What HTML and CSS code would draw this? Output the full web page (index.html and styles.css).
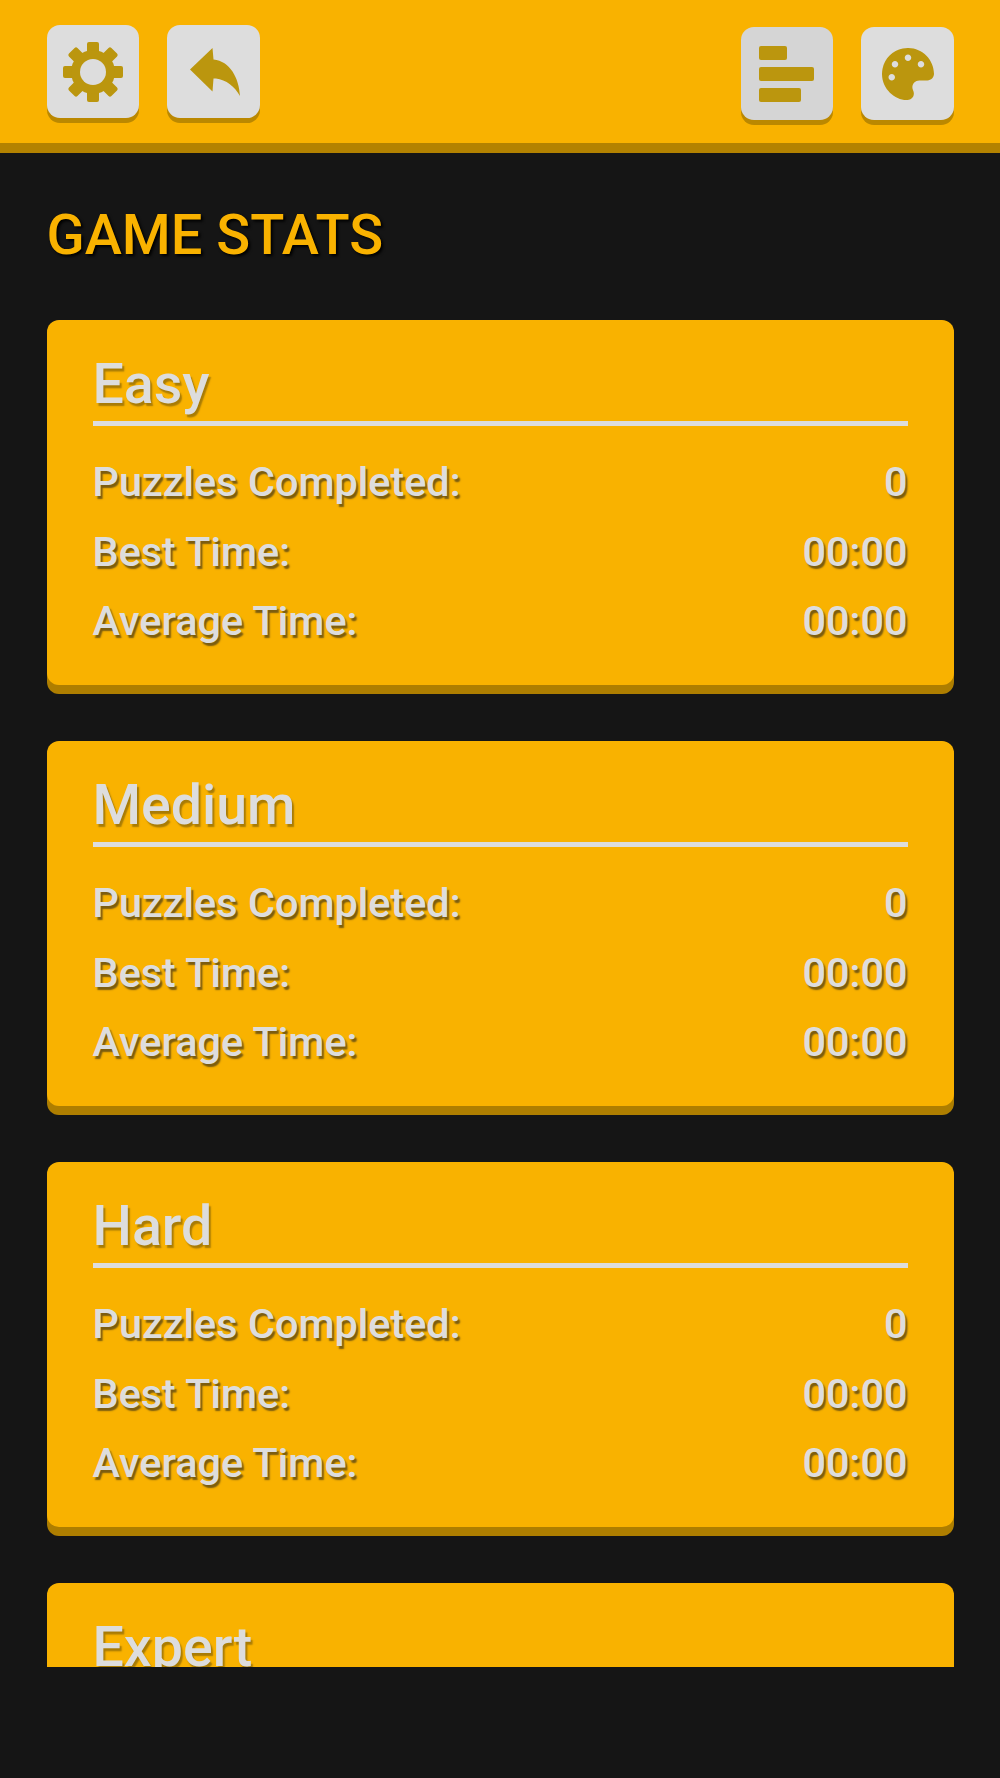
FILE: index.html
```html
<!DOCTYPE html>
<html lang="en">
<head>
<meta charset="utf-8">
<title>Game Stats</title>
<link rel="stylesheet" href="styles.css">
</head>
<body>
<header class="topbar">
  <div class="btn-group btn-group-left">
    <button class="icon-btn" aria-label="Settings">
      <svg class="icon" viewBox="0 0 60 60">
        <g class="icon-fill">
          <rect x="24" y="0" width="12" height="60" rx="2"/>
          <rect x="24" y="0" width="12" height="60" rx="2" transform="rotate(45 30 30)"/>
          <rect x="24" y="0" width="12" height="60" rx="2" transform="rotate(90 30 30)"/>
          <rect x="24" y="0" width="12" height="60" rx="2" transform="rotate(135 30 30)"/>
          <circle cx="30" cy="30" r="22"/>
        </g>
        <circle class="icon-hole" cx="30" cy="30" r="13"/>
      </svg>
    </button>
    <button class="icon-btn" aria-label="Back">
      <svg class="icon" viewBox="0 0 60 60">
        <path class="icon-fill" d="M29.500 6 L30.500 17.500 C47 19 56 36 57 54 C52 45 43 37.500 33 36.500 L30.500 36.500 L29.500 49.500 L7 27.500 Z"/>
      </svg>
    </button>
  </div>
  <div class="btn-group btn-group-right">
    <button class="icon-btn icon-btn-active" aria-label="Stats">
      <span class="bars">
        <span class="bar bar-short"></span>
        <span class="bar bar-long"></span>
        <span class="bar bar-mid"></span>
      </span>
    </button>
    <button class="icon-btn" aria-label="Theme">
      <svg class="icon icon-palette" viewBox="0 0 512 512">
        <path class="icon-fill" d="M204.3 5C104.9 24.400 24.800 104.300 5.200 203.400c-37 187 131.700 326.400 258.800 306.700 41.200-6.400 61.400-54.600 42.500-91.700-23.100-45.400 9.900-98.400 60.900-98.400h79.700c35.800 0 64.800-29.600 64.900-65.300C511.500 97.100 368.100-26.900 204.300 5zM96 320c-17.700 0-32-14.300-32-32s14.300-32 32-32 32 14.300 32 32-14.300 32-32 32zm32-128c-17.700 0-32-14.300-32-32s14.300-32 32-32 32 14.300 32 32-14.300 32-32 32zm128-64c-17.700 0-32-14.300-32-32s14.300-32 32-32 32 14.300 32 32-14.300 32-32 32zm128 64c-17.700 0-32-14.300-32-32s14.300-32 32-32 32 14.300 32 32-14.300 32-32 32z"/>
      </svg>
    </button>
  </div>
</header>
<main class="content">
  <h1 class="page-title">GAME STATS</h1>
  <div class="card-list">
    <section class="card">
      <h2 class="card-title">Easy</h2>
      <div class="row"><span>Puzzles Completed:</span><span>0</span></div>
      <div class="row"><span>Best Time:</span><span>00:00</span></div>
      <div class="row"><span>Average Time:</span><span>00:00</span></div>
    </section>
    <section class="card">
      <h2 class="card-title">Medium</h2>
      <div class="row"><span>Puzzles Completed:</span><span>0</span></div>
      <div class="row"><span>Best Time:</span><span>00:00</span></div>
      <div class="row"><span>Average Time:</span><span>00:00</span></div>
    </section>
    <section class="card">
      <h2 class="card-title">Hard</h2>
      <div class="row"><span>Puzzles Completed:</span><span>0</span></div>
      <div class="row"><span>Best Time:</span><span>00:00</span></div>
      <div class="row"><span>Average Time:</span><span>00:00</span></div>
    </section>
    <section class="card">
      <h2 class="card-title">Expert</h2>
      <div class="row"><span>Puzzles Completed:</span><span>0</span></div>
      <div class="row"><span>Best Time:</span><span>00:00</span></div>
      <div class="row"><span>Average Time:</span><span>00:00</span></div>
    </section>
  </div>
</main>
</body>
</html>
```
FILE: styles.css
```css
* { box-sizing: border-box; }
html, body { height: 100%; }
body {
  margin: 0;
  background: #151515;
  font-family: Roboto, "Liberation Sans", sans-serif;
  overflow: hidden;
}
.topbar {
  display: flex;
  justify-content: space-between;
  height: 153px;
  padding: 0 46.500px;
  background: #f9b200;
  border-bottom: 10px solid #b38200;
}
.btn-group { display: flex; gap: 28px; }
.btn-group-left { padding-top: 25px; }
.btn-group-right { padding-top: 27px; }
.icon-btn {
  display: flex;
  align-items: center;
  justify-content: center;
  width: 92.500px;
  height: 93px;
  padding: 0;
  border: 0;
  border-radius: 13px;
  background: #dddddd;
  box-shadow: 0 5px 0 #bb8800;
}
.icon-btn-active { background: #d5d5d5; }
.icon { width: 60px; height: 60px; display: block; }
.icon-palette { width: 52px; height: 52px; margin-left: 1px; }
.icon-fill { fill: #bb960e; }
.icon-hole { fill: #dddddd; }
.bars { display: flex; flex-direction: column; gap: 7px; width: 55px; }
.bar { display: block; height: 14px; background: #bb960e; border-radius: 2px; }
.bar-short { width: 28px; }
.bar-long { width: 55px; }
.bar-mid { width: 42px; }
.content { padding: 0 46.500px; }
.page-title {
  margin: 0;
  padding-top: 50px;
  height: 167px;
  color: #f9b200;
  font-size: 56px;
  line-height: 64px;
  font-weight: 500;
  text-shadow: 2px 2px 3px #000;
}
.card-list {
  display: flex;
  flex-direction: column;
  gap: 56px;
  height: 1347px;
  padding-bottom: 9px;
  overflow: hidden;
}
.card {
  flex: none;
  height: 365px;
  padding: 28px 46px 0;
  background: #f9b200;
  border-radius: 12px;
  box-shadow: 0 9px 0 #ae7e00;
  color: #dddddd;
}
.card-title {
  margin: 0 0 26px;
  height: 78px;
  padding-top: 4px;
  font-size: 55.500px;
  line-height: 66px;
  font-weight: 500;
  border-bottom: 5px solid #dddddd;
  text-shadow: 2px 3px 1.500px #a87b05;
}
.row {
  display: flex;
  justify-content: space-between;
  height: 69.500px;
  font-size: 41.400px;
  line-height: 61px;
  font-weight: 500;
  text-shadow: 2px 3px 1.500px #7a5c10;
}
```
